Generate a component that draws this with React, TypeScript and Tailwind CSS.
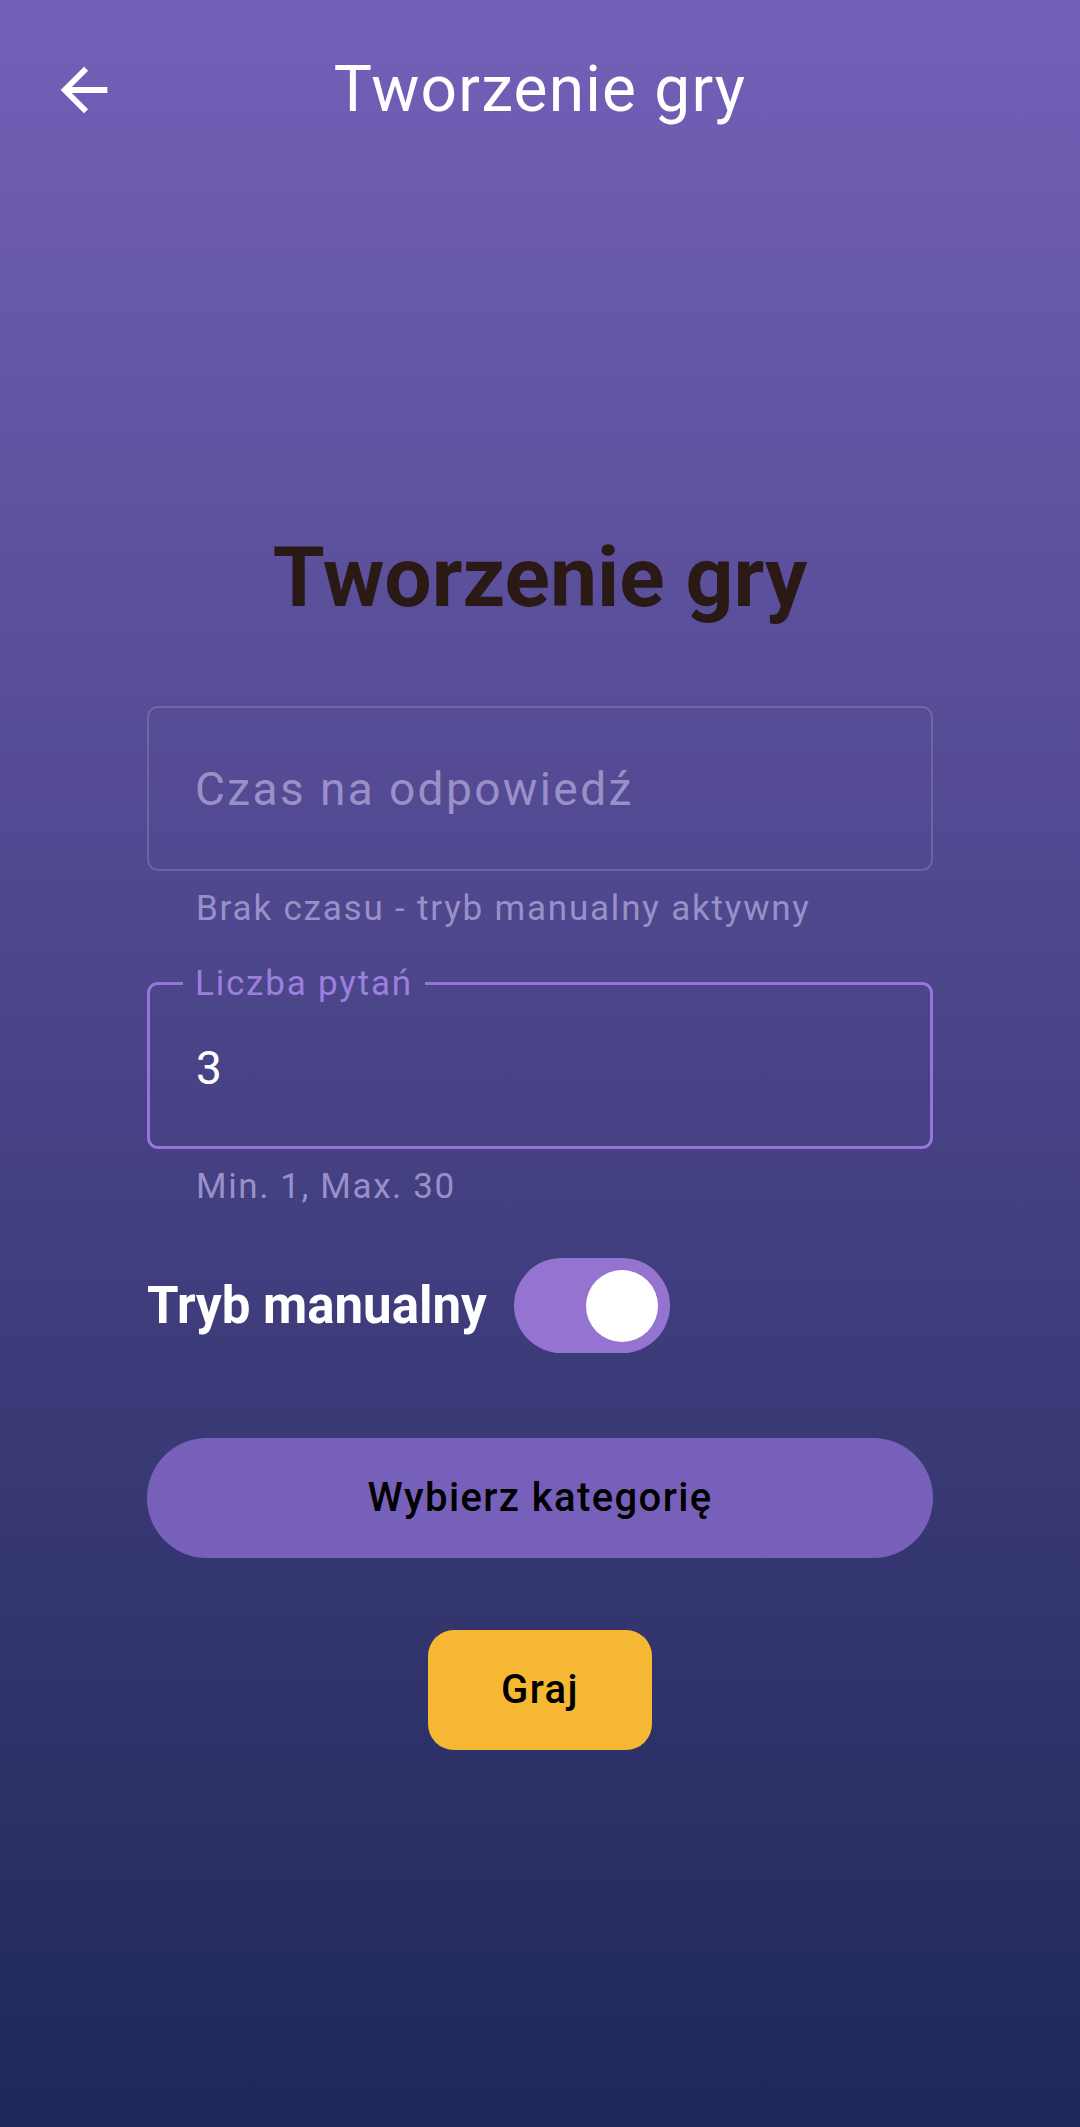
import { useState } from "react";

// Ekran tworzenia gry: czas na odpowiedź, liczba pytań, tryb manualny
export default function App() {
  const [questions, setQuestions] = useState("3");
  const [manual, setManual] = useState(true);

  return (
    <div
      className="min-h-[2127px] w-full bg-gradient-to-b from-[#7460b8] to-[#1f2859] text-white"
      style={{ fontFamily: "Roboto, 'Noto Sans', sans-serif" }}
    >
      {/* pasek górny */}
      <header className="grid h-[180px] grid-cols-[1fr_auto_1fr] items-center">
        <button type="button" className="ml-[49px] h-[70px] w-[70px] justify-self-start">
          <svg viewBox="0 0 24 24" className="h-[70px] w-[70px]" fill="white">
            <path d="M20 11H7.83l5.59-5.59L12 4l-8 8 8 8 1.41-1.41L7.83 13H20v-2z" />
          </svg>
        </button>
        <h1 className="text-[64px] leading-none font-normal tracking-[1.2px]">Tworzenie gry</h1>
        <div />
      </header>

      <main className="mx-auto flex w-[786px] flex-col">
        <h2 className="mt-[356px] text-center text-[84px] leading-none font-bold text-[#2b1916]">
          Tworzenie gry
        </h2>

        {/* czas na odpowiedź (wyłączone w trybie manualnym) */}
        <div className="mt-[86px] flex h-[165px] items-center rounded-[11px] border-2 border-white/15 pl-[46px]">
          <span className="text-[46px] leading-none tracking-[2.4px] text-[#9a90c8]">
            Czas na odpowiedź
          </span>
        </div>
        <p className="mt-[20px] pl-[49px] text-[35px] leading-none tracking-[1.8px] text-[#9a90c8]">
          Brak czasu - tryb manualny aktywny
        </p>

        {/* liczba pytań */}
        <fieldset className="mt-[40px] rounded-[11px] border-[3px] border-[#9575db] p-0">
          <legend className="ml-[33px] px-[12px] text-[35px] leading-none tracking-[1.8px] text-[#9b7fdf]">
            Liczba pytań
          </legend>
          <div className="pt-[40px] pb-[51px] pl-[46px]">
            <input
              value={questions}
              onChange={(e) => setQuestions(e.target.value)}
              className="w-full bg-transparent text-[46px] leading-none text-white outline-none"
            />
          </div>
        </fieldset>
        <p className="mt-[20px] pl-[49px] text-[35px] leading-none tracking-[1.6px] text-[#9a90c8]">
          Min. 1, Max. 30
        </p>

        {/* przełącznik trybu manualnego */}
        <div className="mt-[54px] flex items-center gap-[27px]">
          <span className="text-[51px] leading-none font-bold">Tryb manualny</span>
          <button
            type="button"
            onClick={() => setManual((m) => !m)}
            className={`flex h-[95px] w-[156px] items-center rounded-full px-[12px] ${
              manual ? "justify-end bg-[#9474d0]" : "justify-start bg-[#5a5190]"
            }`}
          >
            <span className="h-[72px] w-[72px] rounded-full bg-white" />
          </button>
        </div>

        <button
          type="button"
          className="mt-[85px] h-[120px] w-full rounded-full bg-[#7760b9] text-[40px] font-medium tracking-[1.4px] text-black"
        >
          Wybierz kategorię
        </button>

        <button
          type="button"
          className="mx-auto mt-[72px] h-[120px] w-[224px] rounded-[26px] bg-[#f6b833] text-[40px] font-medium tracking-[1.4px] text-black"
        >
          Graj
        </button>
      </main>
    </div>
  );
}
